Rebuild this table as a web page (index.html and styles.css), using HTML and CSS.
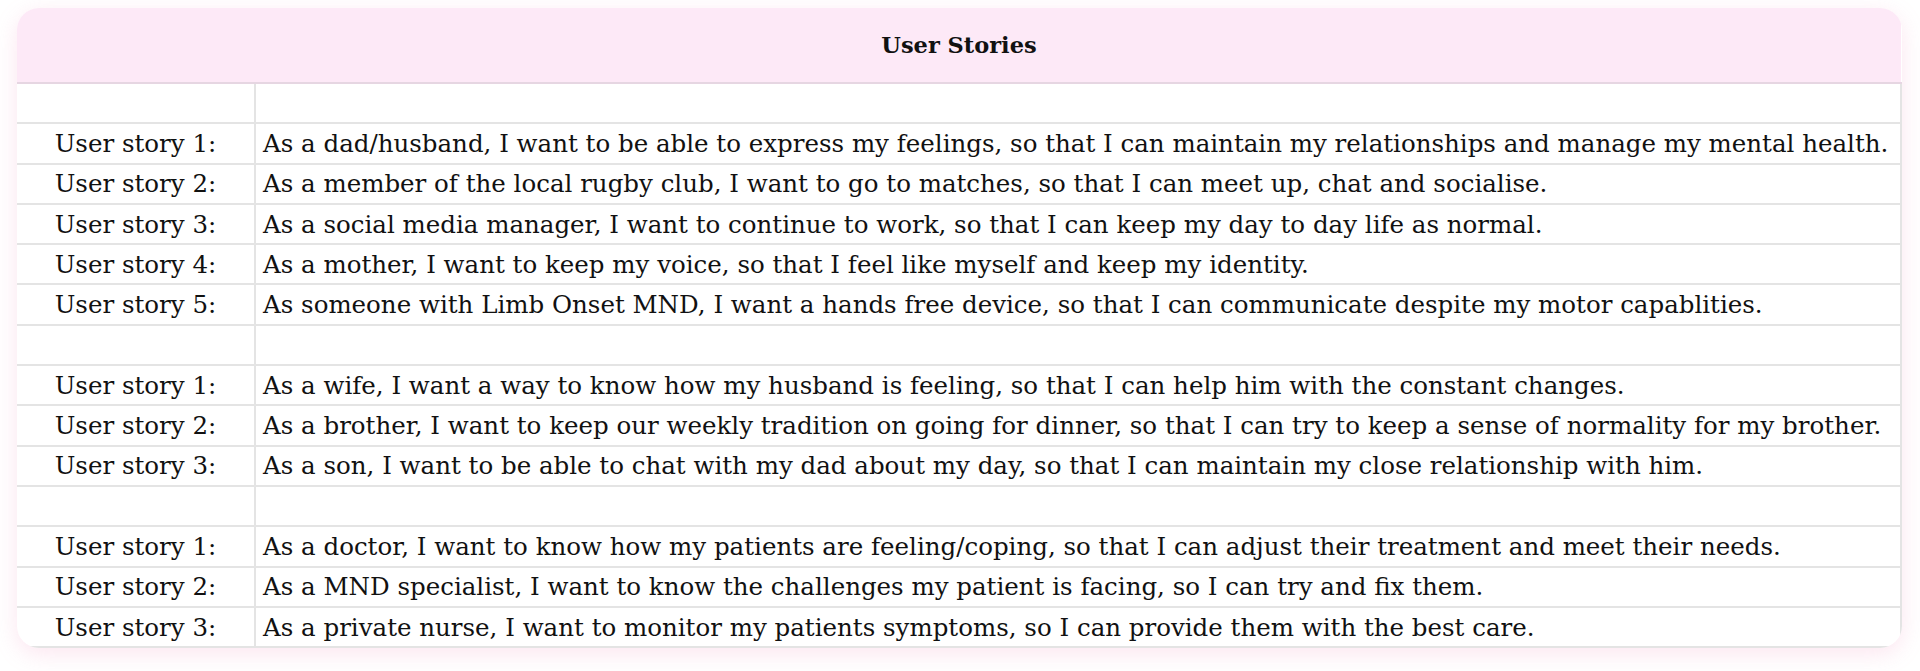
FILE: index.html
```html
<!DOCTYPE html>
<html lang="en">
<head>
<meta charset="utf-8">
<title>User Stories</title>
<link rel="stylesheet" href="styles.css">
</head>
<body>
<div class="page">
  <div class="card">
    <table class="stories">
      <colgroup><col class="col-label"><col class="col-text"></colgroup>
      <thead>
        <tr><th colspan="2" class="title">User Stories</th></tr>
      </thead>
      <tbody>
        <tr class="spacer"><td></td><td></td></tr>
        <tr><td class="label">User story 1:</td><td class="text">As a dad/husband, I want to be able to express my feelings, so that I can maintain my relationships and manage my mental health.</td></tr>
        <tr><td class="label">User story 2:</td><td class="text">As a member of the local rugby club, I want to go to matches, so that I can meet up, chat and socialise.</td></tr>
        <tr><td class="label">User story 3:</td><td class="text">As a social media manager, I want to continue to work, so that I can keep my day to day life as normal.</td></tr>
        <tr><td class="label">User story 4:</td><td class="text">As a mother, I want to keep my voice, so that I feel like myself and keep my identity.</td></tr>
        <tr><td class="label">User story 5:</td><td class="text">As someone with Limb Onset MND, I want a hands free device, so that I can communicate despite my motor capablities.</td></tr>
        <tr class="spacer"><td></td><td></td></tr>
        <tr><td class="label">User story 1:</td><td class="text">As a wife, I want a way to know how my husband is feeling, so that I can help him with the constant changes.</td></tr>
        <tr><td class="label">User story 2:</td><td class="text">As a brother, I want to keep our weekly tradition on going for dinner, so that I can try to keep a sense of normality for my brother.</td></tr>
        <tr><td class="label">User story 3:</td><td class="text">As a son, I want to be able to chat with my dad about my day, so that I can maintain my close relationship with him.</td></tr>
        <tr class="spacer"><td></td><td></td></tr>
        <tr><td class="label">User story 1:</td><td class="text">As a doctor, I want to know how my patients are feeling/coping, so that I can adjust their treatment and meet their needs.</td></tr>
        <tr><td class="label">User story 2:</td><td class="text">As a MND specialist, I want to know the challenges my patient is facing, so I can try and fix them.</td></tr>
        <tr><td class="label">User story 3:</td><td class="text">As a private nurse, I want to monitor my patients symptoms, so I can provide them with the best care.</td></tr>
      </tbody>
    </table>
  </div>
</div>
</body>
</html>
```

FILE: styles.css
```css
html, body {
  margin: 0;
  padding: 0;
  background: #ffffff;
}

.page {
  padding: 8px 18px 26px 17px;
}

.card {
  background: #ffffff;
  border-radius: 22px;
  overflow: hidden;
  box-shadow: 0 6px 22px rgba(240, 140, 185, 0.22);
}

.stories {
  width: 100%;
  border-collapse: collapse;
  table-layout: fixed;
  font-family: "DejaVu Serif", "Liberation Serif", serif;
  font-size: 24.5px;
  color: #111111;
}

.col-label {
  width: 238px;
}

.title {
  height: 74px;
  padding: 0;
  background: #fde9f7;
  border-bottom: 2px solid #e6d6e2;
  font-size: 22.5px;
  font-weight: bold;
  text-align: center;
  color: #111111;
}

.stories tbody tr {
  height: 40.3px;
}

.stories td {
  padding: 0;
  border: 2px solid #e4e4e4;
  white-space: nowrap;
  overflow: hidden;
}

.stories td:first-child {
  border-left: none;
}

.label {
  text-align: center;
}

.text {
  padding-left: 7px !important;
  text-align: left;
}
```
